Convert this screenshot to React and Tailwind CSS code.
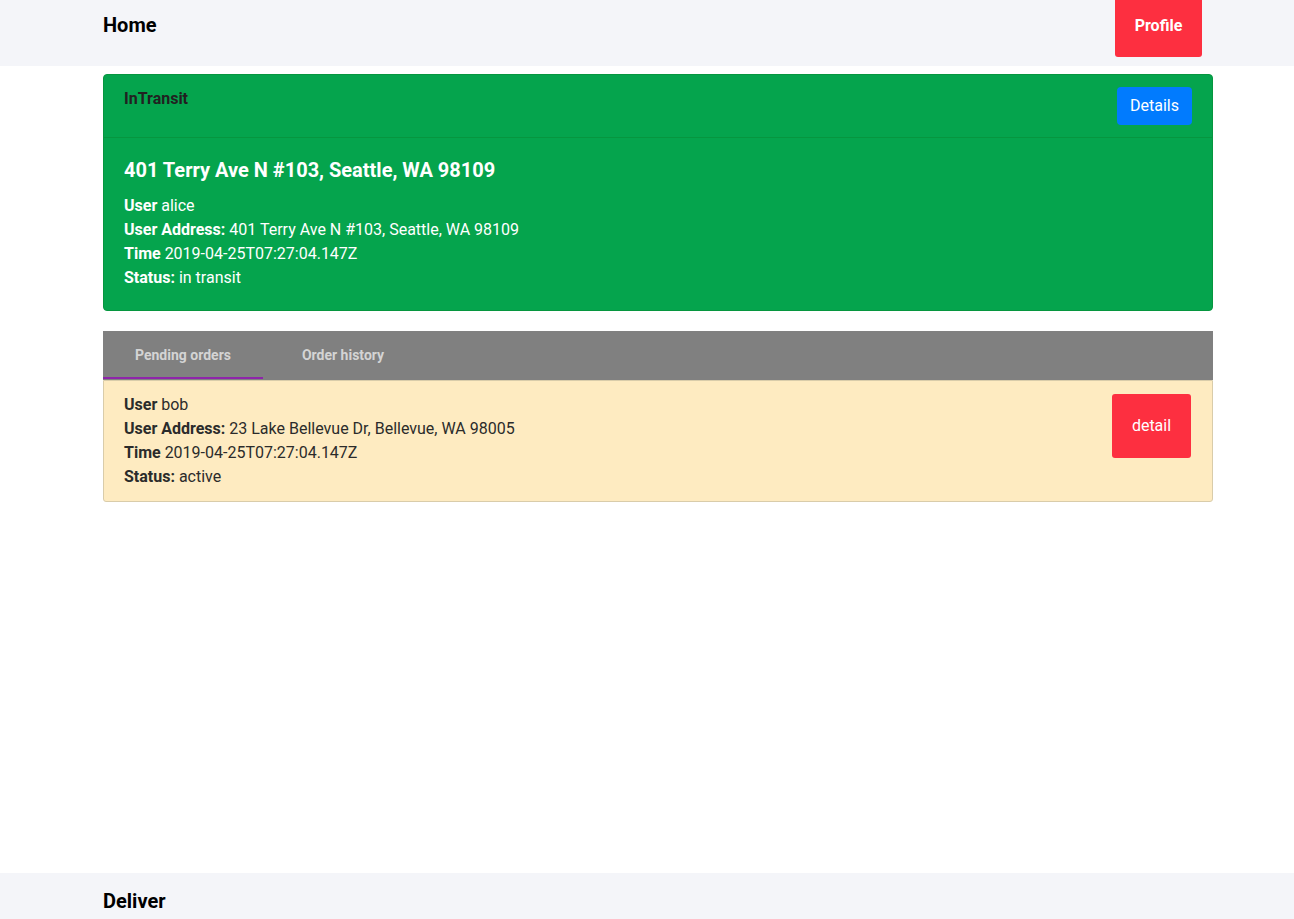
export default function App() {
  const font = { fontFamily: "Roboto, 'Liberation Sans', sans-serif" };
  return (
    <div className="flex h-[939px] flex-col bg-white text-[16px]" style={font}>
      <header className="h-[66px] shrink-0 bg-[#f4f5f9]">
        <div className="ml-[103px] flex w-[1110px] items-start justify-between">
          <div className="pt-[12px] text-[20px] font-bold leading-[26px] text-black">Home</div>
          <button className="mr-[11px] h-[57px] w-[87px] rounded-b-[3px] bg-[#fd2f40] pb-[6px] text-[16px] font-bold text-white">
            Profile
          </button>
        </div>
      </header>

      <main className="flex-1">
        <div className="ml-[103px] w-[1110px] pt-[8px]">
          <div className="overflow-hidden rounded-[4px] border border-[#06963f] bg-[#05a44d]">
            <div className="flex h-[63px] items-start justify-between border-b border-[#06963f] px-[20px] pt-[12px]">
              <div className="text-[16px] font-bold leading-[24px] text-[#212121]">InTransit</div>
              <button className="h-[38px] w-[75px] rounded-[4px] bg-[#017bfe] text-[16px] text-white">
                Details
              </button>
            </div>
            <div className="px-[20px] pb-[20px] pt-[20px] text-white">
              <div className="mb-[12px] text-[20px] font-bold leading-[24px]">401 Terry Ave N #103, Seattle, WA 98109</div>
              <div className="leading-[24px]"><b>User</b> alice</div>
              <div className="leading-[24px]"><b>User Address:</b> 401 Terry Ave N #103, Seattle, WA 98109</div>
              <div className="leading-[24px]"><b>Time</b> 2019-04-25T07:27:04.147Z</div>
              <div className="leading-[24px]"><b>Status:</b> in transit</div>
            </div>
          </div>

          <div className="mt-[20px]">
            <div className="flex h-[49px] bg-[#808080] pb-[1px]">
              <div className="flex w-[160px] items-center justify-center border-b-[2px] border-[#8e24aa] pt-[3px] text-[14px] font-bold text-[#d4d4d4]">
                Pending orders
              </div>
              <div className="flex w-[160px] items-center justify-center pt-[1px] text-[14px] font-bold text-[#d4d4d4]">
                Order history
              </div>
            </div>
            <div className="flex items-start justify-between rounded-b-[3px] border border-[#d9ccaa] bg-[#feebc1] pb-[12px] pl-[20px] pr-[21px] pt-[12px] text-[#2b2b2b]">
              <div>
                <div className="leading-[24px]"><b>User</b> bob</div>
                <div className="leading-[24px]"><b>User Address:</b> 23 Lake Bellevue Dr, Bellevue, WA 98005</div>
                <div className="leading-[24px]"><b>Time</b> 2019-04-25T07:27:04.147Z</div>
                <div className="leading-[24px]"><b>Status:</b> active</div>
              </div>
              <button className="mt-[1px] h-[64px] w-[79px] rounded-[3px] bg-[#fd2f40] text-[16px] text-white">
                detail
              </button>
            </div>
          </div>
        </div>
      </main>

      <footer className="h-[66px] shrink-0 bg-[#f4f5f9]">
        <div className="ml-[103px] w-[1110px] pt-[15px] text-[20px] font-bold leading-[26px] text-black">Deliver</div>
      </footer>
    </div>
  );
}
